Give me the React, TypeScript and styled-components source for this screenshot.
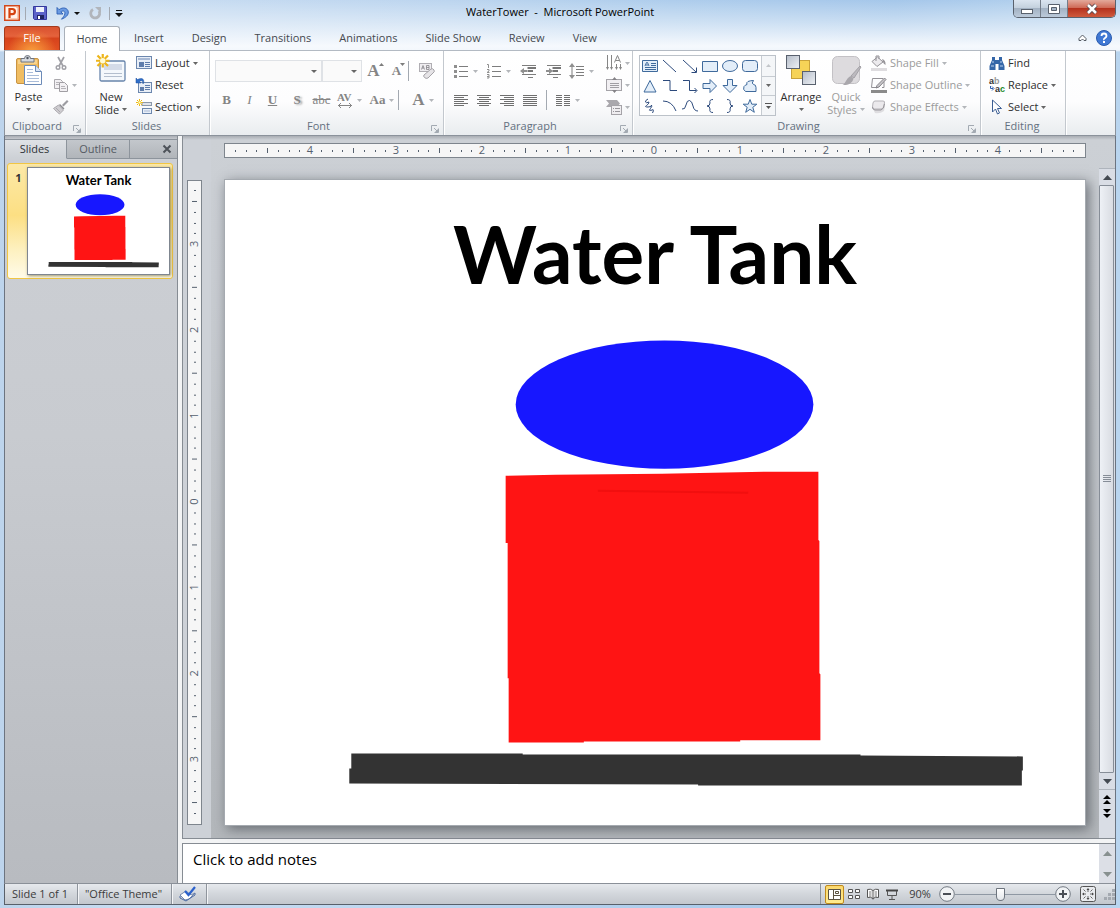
import React from "react";
import styled, { createGlobalStyle, css } from "styled-components";

const GlobalStyle = createGlobalStyle`
  *, *::before, *::after { box-sizing: border-box; }
  body { margin: 0; font: 11px/14px "Open Sans", "Noto Sans", sans-serif; color: #3b3b3b; }
  button, select, textarea { font: inherit; color: inherit; background: none; border: 0; padding: 0; margin: 0; }
  h1, h2, p { margin: 0; font: inherit; }
`;

/* ---------- window frame ---------- */

const Window = styled.div`
  display: flex;
  flex-direction: column;
  height: 100vh;
  min-height: 600px;
  padding: 0 4px 3px;
  background:
    linear-gradient(180deg, rgba(255, 255, 255, 0) 0, rgba(255, 255, 255, 0.4) 22px, rgba(249, 251, 254, 0.95) 46px, rgba(249, 251, 254, 0.9) 50px, rgba(255, 255, 255, 0) 52px),
    linear-gradient(90deg, #bdd4ec 0, #c9ddf2 12%, #bcd5ef 40%, #aecdec 60%, #a5c7ea 80%, #b9d5ef 100%);
`;

const TitleBar = styled.header`
  display: grid;
  grid-template-columns: 1fr auto 1fr;
  height: 26px;
  flex: none;
`;

const QuickAccess = styled.div`
  display: flex;
  align-items: center;
  gap: 5px;
`;

const IconButton = styled.button<{ $pad?: number }>`
  display: flex;
  align-items: center;
  justify-content: center;
  gap: 5px;
  padding: 0 ${(p) => p.$pad ?? 0}px;
`;

const Divider = styled.span<{ $height?: number }>`
  width: 1px;
  height: ${(p) => p.$height ?? 13}px;
  background: #a3a9b1;
  flex: none;
`;

const WindowTitle = styled.h1`
  color: #000;
  font-size: 11px;
  line-height: 24px;
  text-align: center;
  white-space: pre;
`;

const Controls = styled.div`
  display: flex;
  justify-self: end;
  height: 18px;
  border: 1px solid #59616d;
  border-top: 0;
  border-radius: 0 0 5px 5px;
  overflow: hidden;
`;

const Control = styled.button<{ $close?: boolean }>`
  display: flex;
  align-items: center;
  justify-content: center;
  width: ${(p) => (p.$close ? 47 : 27)}px;
  border-right: ${(p) => (p.$close ? 0 : 1)}px solid #747d89;
  background: ${(p) =>
    p.$close
      ? "linear-gradient(180deg, #e3a99b 0, #cf6b58 45%, #b5321e 50%, #cf5a3c 100%)"
      : "linear-gradient(180deg, #dbe5f0 0, #c4d1de 45%, #a3b2c3 50%, #bccada 100%)"};
`;

/* ---------- ribbon tabs ---------- */

const TabRow = styled.nav`
  display: flex;
  height: 24px;
  flex: none;
  font-size: 11px;
`;

const FileTab = styled.button`
  width: 56px;
  margin-right: 4px;
  padding-bottom: 2px;
  color: #fff;
  border: 1px solid #a53a1c;
  border-bottom: 0;
  border-radius: 3px 3px 0 0;
  background: radial-gradient(ellipse at 50% 110%, #f9a13d 0, rgba(240, 110, 45, 0) 65%), linear-gradient(180deg, #d9532f 0, #e5623c 40%, #d6431c 50%, #e25022 100%);
`;

const Tab = styled.button<{ $active?: boolean }>`
  position: relative;
  padding: 0 14px;
  color: #45494f;
  ${(p) =>
    p.$active &&
    css`
      width: 56px;
      padding: 0 0 1px;
      height: 25px;
      background: #fff;
      border: 1px solid #a9b0b9;
      border-bottom: 0;
      border-radius: 3px 3px 0 0;
    `}
`;

const TabTools = styled.div`
  display: flex;
  align-items: center;
  gap: 9px;
  margin-left: auto;
  padding-right: 4px;
`;

/* ---------- ribbon ---------- */

const Ribbon = styled.section`
  display: flex;
  height: 86px;
  flex: none;
  border: 1px solid #8b929b;
  border-top-color: #b3bac3;
  background: linear-gradient(180deg, #fff 0, #fdfdfe 60%, #e9ecef 100%);
`;

const GroupBox = styled.section<{ $width: number }>`
  display: flex;
  flex-direction: column;
  width: ${(p) => p.$width}px;
  flex: none;
  border-right: 1px solid #c3c8ce;
  box-shadow: 1px 0 0 #fff;
`;

const GroupBody = styled.div<{ $pad?: number }>`
  display: flex;
  height: 69px;
  padding: 1px 0 0 ${(p) => p.$pad ?? 4}px;
`;

const GroupLabel = styled.div`
  display: flex;
  align-items: center;
  height: 14px;
  padding: 0 4px 0 2px;
  line-height: 12px;
  color: #64707f;
  span { flex: 1; text-align: center; height: 14px; }
  button { padding: 3px 0 0 6px; }
`;

const Column = styled.div<{ $left?: number }>`
  display: flex;
  flex-direction: column;
  margin-left: ${(p) => p.$left ?? 0}px;
`;

const BigButton = styled.button<{ $width: number; $off?: boolean }>`
  display: flex;
  flex-direction: column;
  align-items: center;
  width: ${(p) => p.$width}px;
  padding-top: 2px;
  line-height: 13px;
  white-space: nowrap;
  color: ${(p) => (p.$off ? "#9b9b9b" : "#2e2e2e")};
  > svg { flex: none; }
`;

const CaretLine = styled.span`
  display: flex;
  align-items: center;
  gap: 3px;
  min-height: 13px;
`;

const SmallButton = styled.button<{ $off?: boolean }>`
  display: flex;
  align-items: center;
  gap: 3px;
  height: 22px;
  white-space: nowrap;
  color: ${(p) => (p.$off ? "#9b9b9b" : "#2e2e2e")};
  > svg { flex: none; }
`;

const Tools = styled.div<{ $gap: number; $height: number }>`
  display: flex;
  align-items: center;
  gap: ${(p) => p.$gap}px;
  height: ${(p) => p.$height}px;
`;

const Combo = styled.label<{ $width: number }>`
  display: flex;
  align-items: center;
  width: ${(p) => p.$width}px;
  height: 22px;
  border: 1px solid #dfe2e6;
  background: #fafafa;
  padding-right: 4px;
  select { flex: 1; min-width: 0; appearance: none; height: 20px; outline: 0; }
`;

const Letter = styled.button<{ $width?: number; $look?: string }>`
  display: flex;
  align-items: center;
  justify-content: center;
  gap: 4px;
  width: ${(p) => p.$width ?? 23}px;
  height: 22px;
  font: bold 13px/16px "Liberation Serif", serif;
  color: #858585;
  ${(p) => p.$look === "italic" && "font-style: italic; font-weight: normal;"}
  ${(p) => p.$look === "underline" && "text-decoration: underline;"}
  ${(p) => p.$look === "shadow" && "text-shadow: 2px 1px 2px #999;"}
  ${(p) => p.$look === "strike" && "text-decoration: line-through; font-weight: normal;"}
`;

const SizeLetter = styled.span<{ $size: number }>`
  font-size: ${(p) => p.$size}px;
  line-height: 20px;
`;

const SizeMark = styled.span`
  display: flex;
  height: 16px;
  margin-left: -5px;
`;

const Gallery = styled.div`
  display: flex;
  width: 137px;
  height: 61px;
  margin-top: 3px;
  border: 1px solid #bcc2c9;
  background: #fff;
`;

const ShapeGrid = styled.div`
  display: grid;
  grid-template-columns: repeat(6, 20px);
  grid-auto-rows: 20px;
  width: 121px;
  button { display: flex; align-items: center; justify-content: center; }
`;

const GalleryScroll = styled.div`
  display: grid;
  grid-template-rows: repeat(3, 1fr);
  flex: 1;
  border-left: 1px solid #c6cbd1;
  background: #f4f6f8;
  button { display: flex; align-items: center; justify-content: center; }
  button + button { border-top: 1px solid #c6cbd1; }
`;

/* ---------- work area ---------- */

const Work = styled.main`
  display: flex;
  flex: 1;
  min-height: 0;
  border: 1px solid #6c7480;
  border-top: 0;
  border-bottom-color: #8a9098;
  background: #f3f4f5;
`;

const SidePanel = styled.aside`
  display: flex;
  flex-direction: column;
  width: 173px;
  flex: none;
  border-right: 1px solid #868c93;
  background: linear-gradient(180deg, #a9adb3 0, #cdd0d5 4px, #c8cbd0 40%, #b8bbc0 100%);
`;

const PanelTabs = styled.div`
  display: flex;
  height: 20px;
  margin-top: 3px;
  flex: none;
`;

const PanelTab = styled.button<{ $active?: boolean }>`
  width: ${(p) => (p.$active ? 62 : 63)}px;
  padding-right: ${(p) => (p.$active ? 2 : 0)}px;
  color: ${(p) => (p.$active ? "#2f3338" : "#555b63")};
  border-top: 1px solid #8d949c;
  border-right: 1px solid #8d949c;
  border-bottom: 1px solid ${(p) => (p.$active ? "#cdd1d6" : "#8d949c")};
  background: ${(p) => (p.$active ? "linear-gradient(180deg, #dfe2e6, #cdd1d6)" : "linear-gradient(180deg, #c3c7cc, #b1b5ba)")};
`;

const PanelClose = styled.div`
  display: flex;
  flex: 1;
  align-items: center;
  justify-content: flex-end;
  padding-right: 5px;
  border-top: 1px solid #8d949c;
  border-bottom: 1px solid #8d949c;
  background: linear-gradient(180deg, #c3c7cc, #b1b5ba);
`;

const ThumbItem = styled.button`
  display: flex;
  align-items: flex-start;
  margin: 4px 4px 0 2px;
  height: 116px;
  padding: 3px 2px;
  border: 1px solid #f1c644;
  border-radius: 3px;
  background: linear-gradient(180deg, #fce9a8 0, #fcdf83 45%, #fdf0bf 75%, #fffbe8 100%);
  b { width: 17px; padding-top: 4px; text-align: center; color: #333; }
`;

const SlideBox = styled.div<{ $thumb?: boolean }>`
  display: flex;
  flex-direction: column;
  flex: 1;
  min-width: 0;
  height: ${(p) => (p.$thumb ? "108px" : "auto")};
  background: #fff;
  border: 1px solid ${(p) => (p.$thumb ? "#7f8690" : "#a5aab0")};
  box-shadow: ${(p) => (p.$thumb ? "1px 1px 3px rgba(90, 80, 30, 0.6)" : "3px 3px 12px rgba(60, 65, 72, 0.65)")};
  svg { flex: 1; min-height: 0; width: 100%; }
`;

const SlideTitle = styled.h2<{ $thumb?: boolean }>`
  padding-bottom: ${(p) => (p.$thumb ? 0 : 8)}px;
  font: bold ${(p) => (p.$thumb ? "13px/25px" : "80px/147px")} Lato, sans-serif;
  color: #000;
  text-align: center;
  flex: none;
`;

const Splitter = styled.div`
  width: 4px;
  flex: none;
`;

const Editor = styled.div`
  display: flex;
  flex-direction: column;
  flex: 1;
  min-width: 0;
`;

const Stage = styled.div`
  display: flex;
  flex: 1;
  min-height: 0;
  border-left: 1px solid #868c93;
  border-bottom: 1px solid #868c93;
  background: linear-gradient(180deg, #a9adb3 0, #ccd0d5 4px, #c9cdd2 20%, #b3b7bb 100%);
`;

const RulerGutter = styled.div`
  display: flex;
  width: 28px;
  flex: none;
  padding: 44px 0 13px 4px;
  background: linear-gradient(180deg, #a9adb3 0, #cdd1d7 4px);
`;

const RulerSvg = styled.svg<{ $vertical?: boolean }>`
  display: block;
  flex: none;
  width: ${(p) => (p.$vertical ? "15px" : "100%")};
  height: ${(p) => (p.$vertical ? "100%" : "15px")};
  background: #f6f6f6;
  border: 1px solid #7e858d;
  font: 11px "Open Sans", sans-serif;
  fill: #55606e;
`;

const Canvas = styled.div`
  display: flex;
  flex-direction: column;
  flex: 1;
  min-width: 0;
  gap: 21px;
  padding: 7px 13px 12px 13px;
`;

const Scroll = styled.div`
  display: flex;
  flex-direction: column;
  width: 16px;
  flex: none;
  margin-top: 32px;
  background: #d9dde5;
  border-top: 1px solid #aeb4bc;
  > button { display: flex; align-items: center; justify-content: center; height: 16px; flex: none; }
`;

const ScrollThumb = styled.div`
  display: flex;
  align-items: center;
  justify-content: center;
  flex: 1;
  margin: 0 1px 0 0;
  border: 1px solid #868d97;
  border-radius: 1px;
  background: linear-gradient(90deg, #eef1f6, #d9dce2);
`;

const PageButtons = styled.div`
  display: flex;
  flex-direction: column;
  gap: 5px;
  align-items: center;
  height: 49px;
  padding-top: 4px;
  border-top: 1px solid #aeb4bc;
`;

const Notes = styled.div`
  display: flex;
  height: 40px;
  flex: none;
  margin-top: 4px;
  border-top: 1px solid #868c93;
  border-left: 1px solid #868c93;
  background: #fff;
  textarea {
    flex: 1;
    min-width: 0;
    padding: 5px 10px;
    resize: none;
    outline: 0;
    overflow: hidden;
    font-size: 15px;
    line-height: 20px;
    color: #000;
    &::placeholder { color: #000; opacity: 1; }
  }
`;

const NotesScroll = styled.div`
  display: flex;
  flex-direction: column;
  justify-content: space-between;
  width: 16px;
  background: #dcdfe6;
  button { display: flex; align-items: center; justify-content: center; height: 18px; }
`;

/* ---------- status bar ---------- */

const Status = styled.footer`
  display: flex;
  align-items: stretch;
  height: 21px;
  flex: none;
  border: 1px solid #59606a;
  border-top: 0;
  background: linear-gradient(180deg, #e6e9ed 0, #d4d8dd 45%, #c3c7cd 100%);
`;

const StatusItem = styled.button`
  display: flex;
  align-items: center;
  padding: 0 9px 0 7px;
  border-right: 1px solid #8f959d;
  box-shadow: 1px 0 0 #f4f5f7;
  white-space: nowrap;
`;

const StatusRight = styled.div`
  display: flex;
  align-items: center;
  margin-left: auto;
  padding-left: 4px;
  border-left: 1px solid #8f959d;
`;

const ViewButton = styled.button<{ $active?: boolean }>`
  display: flex;
  align-items: center;
  justify-content: center;
  width: 19px;
  height: 19px;
  ${(p) =>
    p.$active &&
    css`
      border: 1px solid #c08a1c;
      border-radius: 2px;
      background: linear-gradient(180deg, #fbd86d, #ffeb8f);
    `}
`;

const FitButton = styled(ViewButton)`
  margin: 0 7px;
`;

const ZoomText = styled.button`
  width: 38px;
  text-align: center;
`;

const ZoomRange = styled.input`
  appearance: none;
  width: 100px;
  height: 17px;
  margin: 0;
  background: linear-gradient(#8f98a3, #8f98a3) center / 100% 1px no-repeat;
  &::-webkit-slider-thumb {
    appearance: none;
    width: 9px;
    height: 13px;
    border: 1px solid #6d747d;
    border-radius: 1px 1px 5px 5px;
    background: linear-gradient(180deg, #fff, #e4e7eb);
  }
`;

/* ---------- drawings ---------- */

type IcoProps = { w: number; h?: number; children: React.ReactNode };
const Ico = ({ w, h = w, children }: IcoProps) => (
  <svg width={w} height={h} viewBox={`0 0 ${w} ${h}`} fill="none" overflow="visible" aria-hidden="true">
    {children}
  </svg>
);

const CaretSvg = styled.svg`
  flex: none;
`;

const Caret = ({ color = "#666", up = false, w = 5 }: { color?: string; up?: boolean; w?: number }) => (
  <CaretSvg width={w} height={w > 6 ? 5 : 3} viewBox="0 0 6 3" preserveAspectRatio="none" aria-hidden="true">
    <path d={up ? "M0 3h6L3 0z" : "M0 0h6L3 3z"} fill={color} />
  </CaretSvg>
);
const soft = "#b3b6ba";

const Launcher = ({ name }: { name: string }) => (
  <IconButton aria-label={name}>
    <Ico w={8}>
      <path d="M.5 6V.5H6M3 3l4 4M7.500 3.500v4h-4" stroke="#a3aab2" />
      <path d="M7 4v3H4z" fill="#a3aab2" />
    </Ico>
  </IconButton>
);

const AppIcon = () => (
  <Ico w={16}>
    <rect x=".75" y=".75" width="14.500" height="14.500" fill="#fff4ec" stroke="#d2481c" strokeWidth="1.500" />
    <path d="M12 2h2v12H4" stroke="#f3a27b" />
    <path d="M5.500 13V4h2.800a2.500 2.500 0 0 1 0 5.200H5.500" stroke="#d4420f" strokeWidth="2.200" />
  </Ico>
);
const SaveIcon = () => (
  <Ico w={14}>
    <path d="M.5.500h13v13h-12l-1-1z" fill="#5b62c9" stroke="#34399c" />
    <path d="M3 1h8v5H3z" fill="#eef2fb" />
    <path d="M4 9h7v4H4z" fill="#20245f" />
    <path d="M5 10h2v3H5z" fill="#fff" />
  </Ico>
);
const UndoIcon = () => (
  <Ico w={13} h={14}>
    <path d="M1 1.500v6.500h6L4.800 5.800C7.500 4 9.500 5.500 8.800 8 8.300 10 7 11.500 5.500 13.200 10 11.500 12.500 9 12.300 6 12 2 7 .5 3 3.700z" fill="#6b9be2" stroke="#2d5fb3" strokeWidth=".9" />
  </Ico>
);
const RedoIcon = () => (
  <Ico w={13}>
    <path d="M4 2.500A4.500 4.500 0 1 0 10 4" stroke="#b1b5bb" strokeWidth="2.800" />
    <path d="M6 0h6v6z" fill="#b1b5bb" />
  </Ico>
);
const PasteIcon = () => (
  <Ico w={28} h={36}>
    <rect x="1.500" y="4.500" width="22" height="25" rx="1.500" fill="#f0bd62" stroke="#c99342" />
    <path d="M3 6h19v4H3z" fill="#f7d28c" />
    <path d="M6 8V4.500h3.500a3 3 0 0 1 6 0H19V8z" fill="#d5d9df" stroke="#6d7480" />
    <circle cx="12.500" cy="4" r="1.200" fill="#4d545e" />
    <path d="M9.500 11.500h11l6 6v13h-17z" fill="#fff" stroke="#6c8bb8" />
    <path d="M20.500 11.500v6h6" fill="#d9e5f5" stroke="#6c8bb8" />
    <path d="M12 15.500h6M12 18.500h6M12 21.500h12M12 24.500h12M12 27.500h12" stroke="#a9bcd9" />
  </Ico>
);
const CutIcon = () => (
  <Ico w={16}>
    <path d="M5 2l5 9M11 2L6 11" stroke="#a0a0a6" strokeWidth="1.700" />
    <circle cx="5" cy="12.500" r="1.800" stroke="#a0a0a6" strokeWidth="1.400" />
    <circle cx="11" cy="12.500" r="1.800" stroke="#a0a0a6" strokeWidth="1.400" />
  </Ico>
);
const CopyIcon = () => (
  <Ico w={16}>
    <path d="M1.500 2.500h6l2 2v7h-8z" fill="#f2f0f3" stroke="#aaa8ad" />
    <path d="M6.500 5.500h5l3 3v6h-8z" fill="#f2f0f3" stroke="#a09ea3" />
    <path d="M3 5.500h3M3 7.500h3M8 9.500h4M8 11.500h5" stroke="#b5b3b8" />
  </Ico>
);
const BrushIcon = () => (
  <Ico w={16}>
    <path d="M14 1l1.500 1.500-5 5L9 6z" fill="#9c9ca1" />
    <path d="M7 5l4.500 4.500-1.500 1L6 6z" fill="#8c8c91" />
    <path d="M5.500 6l5 5-4 4C4 13 2 11 .5 9.500z" fill="#cfcdd1" stroke="#aaa8ad" />
    <path d="M3 9l4 4" stroke="#aaa8ad" />
  </Ico>
);
const star = (
  <g stroke="#eeb712" strokeWidth="2">
    <path d="M7 0v14M0 7h14M2 2l10 10M12 2L2 12" />
    <circle cx="7" cy="7" r="2.500" fill="#fff8c8" stroke="#f8e060" />
  </g>
);
const NewSlideIcon = () => (
  <Ico w={30} h={36}>
    <rect x="4" y="7" width="25" height="20" rx="1.500" fill="#f4f8fc" stroke="#6784ab" strokeWidth="1.300" />
    <path d="M8 10h18v6H8z" fill="#d4dbe8" />
    <path d="M8 19.500h18M8 22.500h18" stroke="#b4bfce" />
    <path d="M1.500 1.500l10.500 10.500M12 1.500L1.500 12M6.750 0v13.500M0 6.750h13.500" stroke="#edb51a" strokeWidth="2.200" />
    <circle cx="6.750" cy="6.750" r="2.700" fill="#fffbd5" />
  </Ico>
);
const LayoutIcon = () => (
  <Ico w={16}>
    <rect x=".5" y="1.500" width="15" height="12" fill="#e8eef7" stroke="#6c87ae" />
    <path d="M2 3h12v2H2z" fill="#a8b9d4" />
    <path d="M3 7h5v5H3z" fill="#5e7cab" />
    <path d="M9 7.500h5M9 9.500h5M9 11.500h5" stroke="#5e7cab" />
  </Ico>
);
const ResetIcon = () => (
  <Ico w={16}>
    <rect x="2.500" y="5.500" width="13" height="10" fill="#e8eef7" stroke="#6c87ae" />
    <path d="M4 10h4v4H4z" fill="#5e7cab" />
    <path d="M9 8.500h5M9 10.500h5M9 12.500h5" stroke="#5e7cab" />
    <path d="M0 1v5h5L3.500 4.500C6 3 7 4 7 7c2-4 0-7-5.500-4.500z" fill="#2f6fc9" stroke="#1e4f9d" strokeWidth=".5" />
  </Ico>
);
const SectionIcon = () => (
  <Ico w={16}>
    <rect x="6" y="3.500" width="9.500" height="3" fill="#dfe3ea" stroke="#8c98aa" />
    <rect x="6.500" y="9.500" width="9" height="5" fill="#e8eef7" stroke="#6c87ae" />
    <path d="M8 12h6" stroke="#a8b9d4" />
    <g transform="scale(.5)">{star}</g>
  </Ico>
);
const ClearIcon = () => (
  <Ico w={16}>
    <rect x=".5" y=".5" width="12" height="8" fill="#efedf0" stroke="#b0aeb3" />
    <path d="M2.500 6.500l1.500-4 1.500 4M3 5h2M7.500 2.500v4h2.500v-4zM7.500 4.500H10" stroke="#8f8d92" strokeWidth=".9" />
    <path d="M5 12l7-6q2-1 3 1t-1 3l-5 5q-2 1-3.500-.5T5 12z" fill="#e6e4e7" stroke="#a5a3a8" />
  </Ico>
);
const lines = (ds: string, color = "#7d7d7d") => <path d={ds} stroke={color} />;
const BulletsIcon = () => (
  <Ico w={14}>
    {lines("M5 2.500h9M5 7.500h9M5 12.500h9")}
    <path d="M0 1h3v3H0zM0 6h3v3H0zM0 11h3v3H0z" fill="#8f8f8f" />
  </Ico>
);
const NumberIcon = () => (
  <Ico w={15}>
    {lines("M6 2.500h9M6 7.500h9M6 12.500h9")}
    {lines("M1 .5h1.500V4M1 5.500h2v1.500L1 8.500h2.500M1 10.500h2v3.500H1M1 12.500h2", "#8f8f8f")}
  </Ico>
);
const IndentIcon = ({ right = false }: { right?: boolean }) => (
  <Ico w={16}>
    {lines("M2 2.500h5M7 2.500h9M7 5h9M7 8h6M2 11.500h5M7 11.500h9M8 14.500h5")}
    <path d={right ? "M1 7h3V5l4 3-4 3V9H1z" : "M7 7H4V5L0 8l4 3V9h3z"} fill="#8f8f8f" />
    <path d="M8 4h8v2H8zM8 7h5v2H8z" fill="#777" />
  </Ico>
);
const SpacingIcon = () => (
  <Ico w={15} h={16}>
    {lines("M7 3.500h8M7 6.500h8M7 9.500h8M7 12.500h8M3 3v10")}
    <path d="M0 4l3-4 3 4zM0 12l3 4 3-4z" fill="#8f8f8f" />
  </Ico>
);
const AlignIcon = ({ kind }: { kind: "left" | "center" | "right" | "full" }) => {
  const d = {
    left: "M0 1.500h14M0 3.500h10M0 5.500h14M0 7.500h10M0 9.500h14M0 11.500h10",
    center: "M0 1.500h14M2 3.500h10M0 5.500h14M2 7.500h10M0 9.500h14M2 11.500h10",
    right: "M0 1.500h14M4 3.500h10M0 5.500h14M4 7.500h10M0 9.500h14M4 11.500h10",
    full: "M0 1.500h14M0 3.500h14M0 5.500h14M0 7.500h14M0 9.500h14M0 11.500h14",
  }[kind];
  return <Ico w={14} h={13}>{lines(d, "#6f6f6f")}</Ico>;
};
const ColumnsIcon = () => (
  <Ico w={14} h={13}>{lines("M0 1.500h6M0 3.500h6M0 5.500h6M0 7.500h6M0 9.500h6M0 11.500h6M8 1.500h6M8 3.500h6M8 5.500h6M8 7.500h6M8 9.500h6M8 11.500h6", "#6f6f6f")}</Ico>
);
const DirectionIcon = () => (
  <Ico w={16}>
    {lines("M1.500 0v14M5.500 0v14M10.500 9v5M14.500 9v5M8.500 7.500L11.500.5l3 7M10 5.500h3.500", "#858585")}
    <path d="M0 12h3l-1.500 3zM4 12h3l-1.500 3zM9 12h3l-1.500 3zM13 12h3l-1.500 3z" fill="#858585" />
  </Ico>
);
const AlignTextIcon = () => (
  <Ico w={16}>
    <rect x=".5" y="2.500" width="15" height="11" fill="#f1eff2" stroke="#a5a3a8" />
    {lines("M4 6.500h9M4 8.500h9M4 10.500h9", "#a09ea3")}
    <path d="M6 3l2.500-3L11 3zM6 13l2.500 3 2.500-3z" fill="#858388" />
  </Ico>
);
const SmartArtIcon = () => (
  <Ico w={16}>
    <path d="M0 1h11l3 3.500L11 8H0l3-3.500z" fill="#aaa8ad" />
    <rect x="5.500" y="6.500" width="10" height="9" fill="#efedf0" stroke="#a5a3a8" />
    {lines("M7 9.500h1M7 12.500h1M9 9.500h5M9 12.500h5", "#98969b")}
  </Ico>
);

const shapePaths: { name: string; d: string; fill?: boolean }[] = [
  { name: "Text box", d: "M.5 2.500h15v11H.5zM9 5.500h5M9 7.500h5M3 9.500h11M3 11.500h11M3 8l1.500-3.500h1L7 8M4 7h2", fill: true },
  { name: "Line", d: "M1 2l13 12" },
  { name: "Arrow", d: "M1 2l13 12M14.500 9.500v5h-5" },
  { name: "Rectangle", d: "M.5 3.500h15v10H.5z", fill: true },
  { name: "Oval", d: "M.5 8a7.500 5.500 0 1 0 15 0a7.500 5.500 0 1 0-15 0z", fill: true },
  { name: "Rounded rectangle", d: "M3.500 2.500h9q3 0 3 3v5q0 3-3 3h-9q-3 0-3-3v-5q0-3 3-3z", fill: true },
  { name: "Triangle", d: "M8 2.500L14 14H2z", fill: true },
  { name: "Elbow connector", d: "M1 2.500h7v10h7" },
  { name: "Elbow arrow", d: "M1 2.500h6.500v10h7M12.500 10l2.500 2.500-2.500 2.500" },
  { name: "Right arrow", d: "M1 5.500h7V1.500l6.500 6.500L8 14.500v-4H1z", fill: true },
  { name: "Down arrow", d: "M5.500 1.500h5v6H15l-7 7-7-7h4.500z", fill: true },
  { name: "Freeform", d: "M3.500 13.500q-3-2-1.500-5 1-1.500 3-2-1-2 1-3 2.500-1 5.500-1-2.500 3 0 4 2.500 0 2.500 3v4z", fill: true },
  { name: "Scribble", d: "M6 1q-3 1.500-2.500 3T7 4q0 2-2.500 3.500T6 9t3.500-2q1 1-1 3.500t0 2 2.500-1q1 1-.5 3.500" },
  { name: "Arc", d: "M1 3q9 0 13 10" },
  { name: "Curve", d: "M0 11q3 1 4-4t3.500-4.500T11 8t5 5" },
  { name: "Left brace", d: "M11 1.500q-4 0-3 3.500 0 3-3 3 3 0 3 3-1 3.500 3 3.500" },
  { name: "Right brace", d: "M5 1.500q4 0 3 3.500 0 3 3 3-3 0-3 3 1 3.500-3 3.500" },
  { name: "Star", d: "M8 1.500l1.800 4.700h5l-4 3.100 1.500 5L8 11.300l-4.300 3 1.500-5-4-3.100h5z", fill: true },
];

const ArrangeIcon = () => (
  <Ico w={32} h={36}>
    <defs>
      <linearGradient id="sq" x2="1" y2="1"><stop stopColor="#b5bdc9" /><stop offset="1" stopColor="#eef1f5" /></linearGradient>
    </defs>
    <rect x="6.500" y="6.500" width="18" height="18" fill="#f6d357" stroke="#c9a23a" />
    <rect x="1.500" y="1.500" width="13" height="13" fill="url(#sq)" stroke="#59616e" />
    <rect x="17.500" y="17.500" width="13" height="13" fill="url(#sq)" stroke="#59616e" />
  </Ico>
);
const QuickStylesIcon = () => (
  <Ico w={32} h={36}>
    <rect x="2.500" y="2.500" width="27" height="27" rx="5" fill="#dddbde" stroke="#c3c1c5" />
    <path d="M30 12l1 1-7 11-3-2z" fill="#bcbabf" stroke="#a3a1a6" />
    <path d="M20.500 22l3 2.500c-1 5-6 7-11 6.500 3-1 3-6 8-9z" fill="#a9a7ac" />
  </Ico>
);
const FillIcon = () => (
  <Ico w={17} h={16}>
    <path d="M7.500 2L13 7l-6 4.500L2 6.500z" fill="#eceaed" stroke="#949297" />
    <path d="M6 6V1h3v3" stroke="#949297" />
    <path d="M12 4q4 1 3.500 6-2-1-2.500-3z" fill="#98969b" />
    <path d="M1 13h16v3H1z" fill="#dedcdf" />
  </Ico>
);
const OutlineIcon = () => (
  <Ico w={17} h={16}>
    <path d="M13 1.500H2.500l-1 9H8M14 5v5.500h-2" stroke="#949297" />
    <path d="M14.500 1L16 2.500 9 10l-3 1 1-2.500z" fill="#c8c6ca" stroke="#858388" />
    <path d="M1 13h16v3H1z" fill="#8b8b8b" />
  </Ico>
);
const EffectsIcon = () => (
  <Ico w={17} h={16}>
    <path d="M3 10l12-3-1 5q-4 3-9 2z" fill="#dedde0" />
    <path d="M5 2h8q2 0 1.500 2l-1 4q-.5 2-2.500 2H4Q2 10 2.500 8l.5-4q.5-2 2-2z" fill="#ebe9ec" stroke="#b5b3b8" />
    <path d="M2.500 8Q3 11 5 11h6q3-1 3.500-6" stroke="#98969b" />
  </Ico>
);
const FindIcon = () => (
  <Ico w={16}>
    <path d="M3 2h3v3h4V2h3v3l2.500 6v4h-6V9h-3v6H.5v-4L3 5z" fill="#3466a8" />
    <path d="M2 11h3M11 11h3M4 6v2M12 6v2" stroke="#b9d0ee" />
  </Ico>
);
const ReplaceIcon = () => (
  <Ico w={16} h={16}>
    <g fontFamily="Liberation Sans" fontWeight="bold" fontSize="9">
      <text x="0" y="7" fill="#333">a</text>
      <text x="5" y="7" fill="#999">b</text>
      <text x="6" y="15" fill="#333">a</text>
      <text x="11" y="15" fill="#1d8a2c">c</text>
    </g>
    <path d="M1.500 9v2.500H4M3 9.500l2 2-2 2" stroke="#2f5fb0" />
  </Ico>
);
const SelectIcon = () => (
  <Ico w={16}>
    <path d="M3.500 1v12l3-3 2 5 2-1-2-4.500h4z" fill="#fff" stroke="#3d5f94" />
  </Ico>
);
const SpellIcon = () => (
  <Ico w={18} h={16}>
    <path d="M1 9l6-4 5 4 4-2-6 6-4 1z" fill="#fff" stroke="#7388ad" />
    <path d="M1 10v2l6 3 9-6V7" stroke="#4c6aa3" />
    <path d="M6 5l3.500 4L16 1" stroke="#2c62cc" strokeWidth="2.200" />
  </Ico>
);
const NormalViewIcon = () => (
  <Ico w={13} h={11}>
    <path d="M.5.500h12v10H.5zM5.500.500v10M5.500 6.500h7" fill="#fff" stroke="#5c5340" />
    <path d="M7.500 2.500h3v2h-3z" stroke="#5c5340" />
  </Ico>
);
const SorterIcon = () => (
  <Ico w={12} h={11}><path d="M.5.500h4v3h-4zM7.500.500h4v3h-4zM.5 6.500h4v3h-4zM7.500 6.500h4v3h-4z" fill="#fff" stroke="#555" /></Ico>
);
const ReadingIcon = () => (
  <Ico w={12} h={12}>
    <path d="M.5 1.500q3-1 5.500 1 2.500-2 5.500-1v8q-3-1-5.500 1-2.500-2-5.500-1zM6 2.500v9" fill="#fff" stroke="#555" />
    <path d="M2 4h2.500M2 6h2.500M2 8h2.500M7.500 4H10M7.500 6H10M7.500 8H10" stroke="#777" />
  </Ico>
);
const ShowIcon = () => (
  <Ico w={12} h={11}>
    <path d="M0 1.500h12" stroke="#444" strokeWidth="2" />
    <path d="M1.500 2v4.500h9V2M6 7v3M3 10.500h6" stroke="#555" />
  </Ico>
);
const ZoomGlyph = ({ plus = false }: { plus?: boolean }) => (
  <Ico w={16}>
    <circle cx="8" cy="8" r="7.300" fill="#f1f3f5" stroke="#737a83" />
    <path d={plus ? "M4 8h8M8 4v8" : "M4 8h8"} stroke="#4a4f56" strokeWidth="2" />
  </Ico>
);
const FitIcon = () => (
  <Ico w={16}>
    <rect x=".5" y=".5" width="15" height="15" rx="2" fill="#e9ebee" stroke="#555" />
    <path d="M8 4v2M8 10v2M4 8h2M10 8h2M3.500 3.500l2 2M12.500 3.500l-2 2M3.500 12.500l2-2M12.500 12.500l-2-2" stroke="#666" />
    <path d="M6.500 4h3L8 2zM6.500 12h3L8 14zM4 6.500v3L2 8zM12 6.500v3L14 8z" fill="#444" />
  </Ico>
);
const Grip = () => (
  <Ico w={11}>
    <path d="M8 0h3v3H8zM4 4h3v3H4zM8 4h3v3H8zM0 8h3v3H0zM4 8h3v3H4zM8 8h3v3H8z" fill="#a4a9b0" />
  </Ico>
);

const SlideArt = () => (
  <svg viewBox="1 156 858 488" preserveAspectRatio="xMidYMid meet" role="img" aria-label="Water tank drawing">
    <ellipse cx="439.500" cy="225" rx="148.500" ry="64" fill="#1717ff" />
    <path d="M281 296L331 295 437 294 540 292H593V360L594 361V493L595 494V560H515V561H359V562H284V498H283V363H281z" fill="#ff1414" />
    <path d="M373 311L523 313" stroke="#f20f0f" strokeWidth="2" />
    <path d="M127 573H298V574H635V575L797 576V590H796V605H473V604L125 603V588H127z" fill="#333" />
  </svg>
);

const Ruler = ({ length, vertical = false }: { length: number; vertical?: boolean }) => {
  const unit = 86;
  const mid = length / 2;
  const count = Math.floor(mid / (unit / 8));
  const marks = Array.from({ length: count * 2 + 1 }, (_, i) => i - count);
  return (
    <RulerSvg $vertical={vertical} viewBox={vertical ? `0 0 13 ${length}` : `0 0 ${length} 13`}>
      {marks.map((m) => {
        const at = Math.round(mid + (m * unit) / 8) - 1;
        if (m % 8 === 0) {
          const n = Math.abs(m / 8);
          return vertical ? (
            <text key={m} transform={`translate(10 ${at}) rotate(-90)`} textAnchor="middle">{n}</text>
          ) : (
            <text key={m} x={at} y="10" textAnchor="middle">{n}</text>
          );
        }
        const half = m % 4 === 0;
        const a = half ? 4 : 6;
        const size = half ? 5 : 2;
        return vertical ? (
          <rect key={m} x={a} y={at} width={size} height="1" />
        ) : (
          <rect key={m} x={at} y={a} width="1" height={size} />
        );
      })}
    </RulerSvg>
  );
};

const Slide = ({ thumb = false }: { thumb?: boolean }) => (
  <SlideBox $thumb={thumb}>
    <SlideTitle $thumb={thumb}>Water Tank</SlideTitle>
    <SlideArt />
  </SlideBox>
);

/* ---------- ribbon pieces ---------- */

type GroupProps = { label: string; width: number; pad?: number; launcher?: boolean; children: React.ReactNode };
const Group = ({ label, width, pad, launcher, children }: GroupProps) => (
  <GroupBox $width={width} aria-label={label}>
    <GroupBody $pad={pad}>{children}</GroupBody>
    <GroupLabel>
      <span>{label}</span>
      {launcher && <Launcher name={`${label} options`} />}
    </GroupLabel>
  </GroupBox>
);

type CommandProps = { icon: React.ReactNode; text: string; menu?: boolean; off?: boolean };
const Command = ({ icon, text, menu, off }: CommandProps) => (
  <SmallButton $off={off}>
    {icon}
    <span>{text}</span>
    {menu && <Caret color={off ? soft : undefined} />}
  </SmallButton>
);

const ParagraphColumn = styled(Column)`
  width: 152px;
  padding-top: 7px;
  gap: 5px;
`;

const FontColumn = styled(Column)`
  padding-top: 8px;
  gap: 7px;
`;

const tabs = ["Insert", "Design", "Transitions", "Animations", "Slide Show", "Review", "View"];

export default function App() {
  return (
    <Window>
      <GlobalStyle />
      <TitleBar>
        <QuickAccess>
          <IconButton aria-label="PowerPoint"><AppIcon /></IconButton>
          <Divider />
          <IconButton $pad={2} aria-label="Save"><SaveIcon /></IconButton>
          <IconButton $pad={2} aria-label="Undo"><UndoIcon /><Caret color="#111" w={6} /></IconButton>
          <IconButton $pad={2} aria-label="Redo"><RedoIcon /></IconButton>
          <Divider />
          <IconButton aria-label="Customize toolbar">
            <Ico w={8} h={8}><path d="M1 1.500h6" stroke="#111" /><path d="M0 4h8L4 8z" fill="#111" /></Ico>
          </IconButton>
        </QuickAccess>
        <WindowTitle>{"WaterTower  -  Microsoft PowerPoint"}</WindowTitle>
        <Controls>
          <Control aria-label="Minimize"><Ico w={12} h={10}><rect x=".5" y="5.500" width="11" height="4" fill="#fff" stroke="#59616d" /></Ico></Control>
          <Control aria-label="Maximize"><Ico w={12} h={10}><path d="M.5.500h11v9H.5zM3.500 3.500v3h5v-3z" fill="#fff" fillRule="evenodd" stroke="#59616d" /></Ico></Control>
          <Control $close aria-label="Close">
            <Ico w={12} h={10}><path d="M2 1l8 8M10 1L2 9" stroke="#5b4a50" strokeWidth="4.500" /><path d="M2 1l8 8M10 1L2 9" stroke="#fff" strokeWidth="2.500" /></Ico>
          </Control>
        </Controls>
      </TitleBar>

      <TabRow>
        <FileTab>File</FileTab>
        <Tab $active>Home</Tab>
        {tabs.map((t) => <Tab key={t}>{t}</Tab>)}
        <TabTools>
          <IconButton aria-label="Minimize ribbon">
            <Ico w={9} h={8}><path d="M1 4.500L4.500 1 8 4.500v2H6L4.500 5 3 6.500H1z" fill="#fff" stroke="#555b63" /></Ico>
          </IconButton>
          <IconButton aria-label="Help">
            <Ico w={16}>
              <circle cx="8" cy="8" r="7.500" fill="#3f78d4" stroke="#2a5bae" />
              <path d="M5.500 6q0-2.500 2.500-2.500T10.500 6q0 1-1.500 2T8 10" stroke="#fff" strokeWidth="1.800" />
              <path d="M7 11h2v2H7z" fill="#fff" />
            </Ico>
          </IconButton>
        </TabTools>
      </TabRow>

      <Ribbon>
        <Group label="Clipboard" width={81} pad={3} launcher>
          <BigButton $width={41}><PasteIcon />Paste<CaretLine><Caret /></CaretLine></BigButton>
          <Column $left={4}>
            <SmallButton aria-label="Cut"><CutIcon /></SmallButton>
            <SmallButton aria-label="Copy"><CopyIcon /><Caret color={soft} /></SmallButton>
            <SmallButton aria-label="Format painter"><BrushIcon /></SmallButton>
          </Column>
        </Group>

        <Group label="Slides" width={124} pad={4}>
          <BigButton $width={42}><NewSlideIcon />New<CaretLine>Slide<Caret /></CaretLine></BigButton>
          <Column $left={4}>
            <Command icon={<LayoutIcon />} text="Layout" menu />
            <Command icon={<ResetIcon />} text="Reset" />
            <Command icon={<SectionIcon />} text="Section" menu />
          </Column>
        </Group>

        <Group label="Font" width={234} pad={5} launcher>
          <FontColumn>
            <Tools $gap={0} $height={22}>
              <Combo $width={107}><select aria-label="Font" /><Caret w={6} /></Combo>
              <Combo $width={40}><select aria-label="Font size" /><Caret w={6} /></Combo>
              <Letter $width={27} aria-label="Grow font">
                <SizeLetter $size={17}>A</SizeLetter><SizeMark><Caret up color="#7d7d7d" /></SizeMark>
              </Letter>
              <Letter $width={19} aria-label="Shrink font">
                <SizeLetter $size={13}>A</SizeLetter><SizeMark><Caret color="#7d7d7d" /></SizeMark>
              </Letter>
              <Divider $height={20} />
              <Letter $width={35} aria-label="Clear formatting"><ClearIcon /></Letter>
            </Tools>
            <Tools $gap={0} $height={22}>
              <Letter>B</Letter>
              <Letter $look="italic">I</Letter>
              <Letter $look="underline">U</Letter>
              <Letter $width={26} $look="shadow">S</Letter>
              <Letter $look="strike">abc</Letter>
              <Letter $width={33} aria-label="Character spacing">
                <Ico w={16} h={16}>
                  <text x="0" y="9" fontFamily="Liberation Serif" fontWeight="bold" fontSize="11" fill="#858585">AV</text>
                  <path d="M1 13.500h14M4 11l-2.500 2.500L4 16M12 11l2.500 2.500L12 16" stroke="#858585" />
                </Ico>
                <Caret color={soft} />
              </Letter>
              <Letter $width={32}>Aa<Caret color={soft} /></Letter>
              <Divider $height={20} />
              <Letter $width={48} aria-label="Font color">
                <SizeLetter $size={17}>A</SizeLetter>
                <Caret color={soft} />
              </Letter>
            </Tools>
          </FontColumn>
        </Group>

        <Group label="Paragraph" width={189} pad={10} launcher>
          <ParagraphColumn>
            <Tools $gap={8} $height={24}>
              <IconButton aria-label="Bullets"><BulletsIcon /><Caret color={soft} /></IconButton>
              <IconButton aria-label="Numbering"><NumberIcon /><Caret color={soft} /></IconButton>
              <IconButton $pad={1} aria-label="Decrease indent"><IndentIcon /></IconButton>
              <IconButton aria-label="Increase indent"><IndentIcon right /></IconButton>
              <IconButton aria-label="Line spacing"><SpacingIcon /><Caret color={soft} /></IconButton>
            </Tools>
            <Tools $gap={9} $height={24}>
              <IconButton aria-label="Align left"><AlignIcon kind="left" /></IconButton>
              <IconButton aria-label="Center"><AlignIcon kind="center" /></IconButton>
              <IconButton aria-label="Align right"><AlignIcon kind="right" /></IconButton>
              <IconButton aria-label="Justify"><AlignIcon kind="full" /></IconButton>
              <Divider $height={20} />
              <IconButton aria-label="Columns"><ColumnsIcon /><Caret color={soft} /></IconButton>
            </Tools>
          </ParagraphColumn>
          <Column>
            <SmallButton aria-label="Text direction"><DirectionIcon /><Caret color={soft} /></SmallButton>
            <SmallButton aria-label="Align text"><AlignTextIcon /><Caret color={soft} /></SmallButton>
            <SmallButton aria-label="Convert to SmartArt"><SmartArtIcon /><Caret color={soft} /></SmallButton>
          </Column>
        </Group>

        <Group label="Drawing" width={348} pad={6} launcher>
          <Gallery>
            <ShapeGrid>
              {shapePaths.map((s) => (
                <button key={s.name} aria-label={s.name}>
                  <Ico w={16}><path d={s.d} stroke={s.fill ? "#3f6a9c" : "#2c4a7c"} fill={s.fill ? "#e3eef9" : "none"} /></Ico>
                </button>
              ))}
            </ShapeGrid>
            <GalleryScroll>
              <button aria-label="Scroll up"><Caret up color="#c3c6ca" /></button>
              <button aria-label="Scroll down"><Caret /></button>
              <button aria-label="More shapes">
                <Ico w={7} h={8}><path d="M0 1.500h7" stroke="#555" /><path d="M1 4h5L3.500 7z" fill="#555" /></Ico>
              </button>
            </GalleryScroll>
          </Gallery>
          <BigButton $width={50}><ArrangeIcon />Arrange<CaretLine><Caret /></CaretLine></BigButton>
          <BigButton $width={40} $off><QuickStylesIcon />Quick<CaretLine>Styles<Caret color={soft} /></CaretLine></BigButton>
          <Column $left={4}>
            <Command off icon={<FillIcon />} text="Shape Fill" menu />
            <Command off icon={<OutlineIcon />} text="Shape Outline" menu />
            <Command off icon={<EffectsIcon />} text="Shape Effects" menu />
          </Column>
        </Group>

        <Group label="Editing" width={85} pad={8}>
          <Column>
            <Command icon={<FindIcon />} text="Find" />
            <Command icon={<ReplaceIcon />} text="Replace" menu />
            <Command icon={<SelectIcon />} text="Select" menu />
          </Column>
        </Group>
      </Ribbon>

      <Work>
        <SidePanel>
          <PanelTabs>
            <PanelTab $active>Slides</PanelTab>
            <PanelTab>Outline</PanelTab>
            <PanelClose>
              <IconButton aria-label="Close panel"><Ico w={10}><path d="M1.500 1.500l7 7M8.500 1.500l-7 7" stroke="#4d5259" strokeWidth="2" /></Ico></IconButton>
            </PanelClose>
          </PanelTabs>
          <ThumbItem><b>1</b><Slide thumb /></ThumbItem>
        </SidePanel>
        <Splitter />
        <Editor>
          <Stage>
            <RulerGutter><Ruler length={644} vertical /></RulerGutter>
            <Canvas>
              <Ruler length={858} />
              <Slide />
            </Canvas>
            <Scroll>
              <button aria-label="Scroll up"><Caret up w={9} color="#444a52" /></button>
              <ScrollThumb><Ico w={8} h={8}><path d="M0 .5h8M0 2.500h8M0 4.500h8M0 6.500h8" stroke="#868d97" /></Ico></ScrollThumb>
              <button aria-label="Scroll down"><Caret w={9} color="#444a52" /></button>
              <PageButtons>
                <IconButton aria-label="Previous slide"><Ico w={8} h={10}><path d="M0 5h8L4 1zM0 10h8L4 6z" fill="#000" /></Ico></IconButton>
                <IconButton aria-label="Next slide"><Ico w={8} h={10}><path d="M0 0h8L4 4zM0 5h8L4 9z" fill="#000" /></Ico></IconButton>
              </PageButtons>
            </Scroll>
          </Stage>
          <Notes>
            <textarea aria-label="Notes" placeholder="Click to add notes" />
            <NotesScroll>
              <button aria-label="Scroll notes up"><Caret up w={9} color="#87908f" /></button>
              <button aria-label="Scroll notes down"><Caret w={9} color="#87908f" /></button>
            </NotesScroll>
          </Notes>
        </Editor>
      </Work>

      <Status>
        <StatusItem>Slide 1 of 1</StatusItem>
        <StatusItem>"Office Theme"</StatusItem>
        <StatusItem aria-label="Spelling"><SpellIcon /></StatusItem>
        <StatusRight>
          <ViewButton $active aria-label="Normal"><NormalViewIcon /></ViewButton>
          <ViewButton aria-label="Slide sorter"><SorterIcon /></ViewButton>
          <ViewButton aria-label="Reading view"><ReadingIcon /></ViewButton>
          <ViewButton aria-label="Slide show"><ShowIcon /></ViewButton>
          <ZoomText>90%</ZoomText>
          <IconButton aria-label="Zoom out"><ZoomGlyph /></IconButton>
          <ZoomRange type="range" aria-label="Zoom" min={0} max={100} defaultValue={45} />
          <IconButton aria-label="Zoom in"><ZoomGlyph plus /></IconButton>
          <FitButton aria-label="Fit to window"><FitIcon /></FitButton>
          <Grip />
        </StatusRight>
      </Status>
    </Window>
  );
}
